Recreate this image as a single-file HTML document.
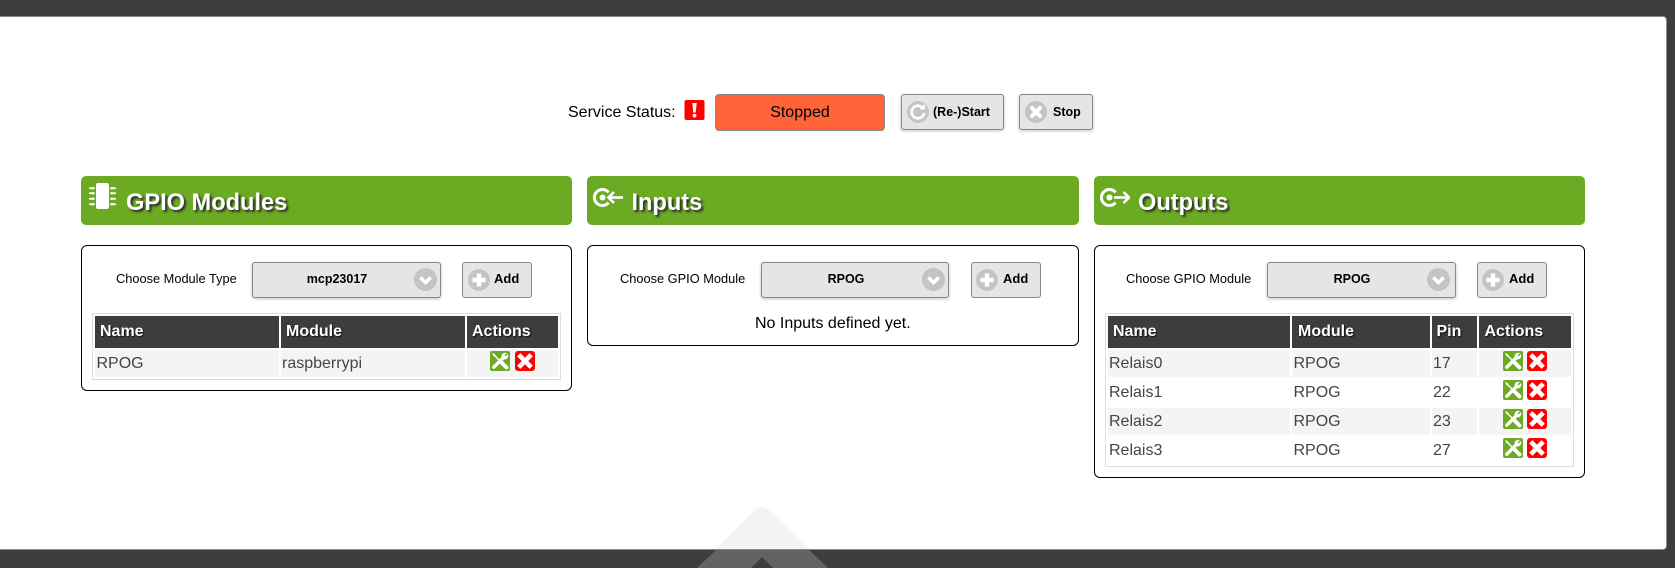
<!DOCTYPE html>
<html><head><meta charset="utf-8"><title>GPIO</title>
<style>
html,body{margin:0;padding:0}
body{width:1675px;height:568px;background:#3d3d3d;position:relative;overflow:hidden;font-family:"Liberation Sans",Arial,sans-serif;color:#000}
div,span,svg{position:absolute;box-sizing:border-box}
.t{white-space:nowrap;line-height:20px;height:20px}
.modal{left:-3px;top:16px;width:1670px;height:534px;background:#fff;border:1px solid #8a8a8a;border-radius:4px}
.gh{height:49px;top:176px;background:#6baa22;border-radius:5px}
.h{top:188px;line-height:30px;height:30px;font-size:23.6px;font-weight:bold;color:#fff;text-shadow:2px 2px 2px #2a2a2a;white-space:nowrap}
.box{top:245px;border:1px solid #000;border-radius:6px;background:#fff}
.btn{background:#e5e5e5;border:1px solid #888;border-radius:3px;box-shadow:0 1px 3px rgba(0,0,0,.25)}
.b{font-weight:bold;font-size:12.5px}
.a{font-weight:bold;font-size:13px}
.l{font-size:12.8px;top:269px}
.tbl{border:1px solid #ddd;top:313px;background:#fff}
.th{background:#3d3d3d;top:316px;height:32px}
.tht{color:#fff;font-weight:bold;font-size:16px;top:322px;text-shadow:1px 1px 1px #111}
.r{background:#f4f4f4;height:27px}
.c{font-size:16px;color:#444}
</style></head><body>
<div class="modal"></div>
<svg style="left:0;top:0" width="1675" height="568" viewBox="0 0 1675 568">
<path d="M716 549L755 510Q762 504 769 510L809 549Z" fill="#f4f4f4"/>
<path d="M716 550L697 568H828L809 550Z" fill="#636363"/>
<path d="M762 557L751 568H773Z" fill="#3d3d3d"/>
</svg>

<svg width="0" height="0" style="left:0;top:0">
<symbol id="wr" viewBox="0 0 20 20"><rect width="20" height="20" rx="2" fill="#6baa22"/>
<path d="M3.5 3.5L12 12" stroke="#fff" stroke-width="1.5" fill="none"/><path d="M11.5 11.500L16.500 16.500" stroke="#fff" stroke-width="4" stroke-linecap="round" fill="none"/><path d="M2 2L5 3.300 5.500 5.500 3.300 5Z" fill="#fff"/>
<path d="M3.800 16.200L12.500 7.500" stroke="#fff" stroke-width="3.400" stroke-linecap="round" fill="none"/><path d="M11.500 5.500C11.500 2.800 14.200 1 17 2L14.600 4.400 15.600 5.400 18 3C19 5.800 17.200 8.500 14.500 8.500Z" fill="#fff"/></symbol>
<symbol id="dl" viewBox="0 0 20 20"><rect width="20" height="20" rx="3" fill="#f00"/><path d="M5 5L15 15M15 5L5 15" stroke="#fff" stroke-width="5" stroke-linecap="square" transform="translate(10 10) scale(.92) translate(-10 -10)"/></symbol>
<symbol id="ad" viewBox="0 0 22 22"><circle cx="11" cy="11" r="11" fill="#c4c4c4"/><path d="M11 4.500V17.500M4.500 11H17.500" stroke="#fff" stroke-width="4.400"/></symbol>
<symbol id="dn" viewBox="0 0 22 22"><circle cx="11" cy="11" r="11" fill="#c4c4c4"/><path d="M6 9L11 14 16 9" stroke="#fff" stroke-width="3.400" fill="none"/></symbol>
</svg>

<!-- status -->
<div class="t" style="left:568px;top:103px;font-size:16px">Service Status:</div>
<svg style="left:684px;top:100px" width="21" height="20" viewBox="0 0 20 20"><rect width="20" height="20" rx="2" fill="#f00"/><path d="M7.800 3H12.200L11.200 12.500H8.800Z" fill="#fff"/><circle cx="10" cy="15.600" r="1.900" fill="#fff"/></svg>
<div class="btn" style="left:715px;top:94px;width:170px;height:37px;background:#ff6338;border-radius:4px;box-shadow:none"></div>
<div class="t" style="left:715px;width:170px;text-align:center;top:103px;font-size:16px">Stopped</div>
<div class="btn" style="left:901px;top:94px;width:103px;height:36px"></div>
<svg style="left:907px;top:101px" width="22" height="22" viewBox="0 0 22 22"><circle cx="11" cy="11" r="11" fill="#c4c4c4"/><path d="M16 7.200A6.300 6.300 0 1 0 17.200 12" stroke="#fff" stroke-width="2.600" fill="none"/><path d="M12.500 8.500H18V3Z" fill="#fff"/></svg>
<div class="t b" style="left:933px;top:102px">(Re-)Start</div>
<div class="btn" style="left:1019px;top:94px;width:74px;height:36px"></div>
<svg style="left:1025px;top:101px" width="22" height="22" viewBox="0 0 22 22"><circle cx="11" cy="11" r="11" fill="#c4c4c4"/><path d="M7 7L15 15M15 7L7 15" stroke="#fff" stroke-width="4" stroke-linecap="round"/></svg>
<div class="t b" style="left:1053px;top:102px">Stop</div>

<!-- panel 1 -->
<div class="gh" style="left:81px;width:491px"></div>
<svg style="left:88px;top:183px" width="28" height="27" viewBox="0 0 28 27"><rect x="8" y="0" width="13" height="26" rx="2" fill="#fff"/><g fill="#fff"><path d="M1 4.500L6.500 4V6.500L1 6ZM1 9.500L6.500 9V11.500L1 11ZM1 15L6.500 14.500V17L1 16.500ZM1 20.500L6.500 20V22.500L1 22Z"/><path d="M22.500 4L28 4.500V6L22.500 6.500ZM22.500 9L28 9.500V11L22.500 11.500ZM22.500 14.500L28 15V16.500L22.500 17ZM22.500 20L28 20.500V22L22.500 22.500Z"/></g></svg>
<div class="h" style="left:126px">GPIO Modules</div>
<div class="box" style="left:81px;width:491px;height:146px"></div>
<div class="t l" style="left:116px">Choose Module Type</div>
<div class="btn" style="left:252px;top:262px;width:189px;height:36px"></div>
<div class="t b" style="left:252px;width:170px;text-align:center;top:269px">mcp23017</div>
<svg style="left:414px;top:268px" width="23" height="23"><use href="#dn"/></svg>
<div class="btn" style="left:462px;top:262px;width:70px;height:36px;box-shadow:none"></div>
<svg style="left:468px;top:269px" width="22" height="22"><use href="#ad"/></svg>
<div class="t a" style="left:494px;top:269px">Add</div>
<div class="tbl" style="left:92px;width:469px;height:67px"></div>
<div class="th" style="left:95px;width:184px"></div><div class="th" style="left:281px;width:184px"></div><div class="th" style="left:467px;width:91px"></div>
<div class="t tht" style="left:100px">Name</div><div class="t tht" style="left:286px">Module</div><div class="t tht" style="left:472px">Actions</div>
<div class="r" style="left:95px;top:350px;width:184px"></div><div class="r" style="left:281px;top:350px;width:184px"></div><div class="r" style="left:467px;top:350px;width:91px"></div>
<div class="t c" style="left:96.500px;top:354px">RPOG</div><div class="t c" style="left:282px;top:354px">raspberrypi</div>
<svg style="left:490px;top:351px" width="20" height="20"><use href="#wr"/></svg><svg style="left:515px;top:351px" width="20" height="20"><use href="#dl"/></svg>

<!-- panel 2 -->
<div class="gh" style="left:587px;width:492px"></div>
<svg style="left:593px;top:187px" width="30" height="21" viewBox="0 0 30 21"><path d="M15.600 5.400A8 8 0 1 0 15.600 15.600" stroke="#fff" stroke-width="3" fill="none"/><circle cx="9.500" cy="10.500" r="3" fill="#fff"/><path d="M30 10.500H16" stroke="#fff" stroke-width="2.600"/><path d="M21 5L15.500 10.500 21 16" stroke="#fff" stroke-width="2.600" fill="none"/></svg>
<div class="h" style="left:631.500px">Inputs</div>
<div class="box" style="left:587px;width:492px;height:101px"></div>
<div class="t l" style="left:620px">Choose GPIO Module</div>
<div class="btn" style="left:761px;top:262px;width:188px;height:36px"></div>
<div class="t b" style="left:761px;width:170px;text-align:center;top:269px">RPOG</div>
<svg style="left:922px;top:268px" width="23" height="23"><use href="#dn"/></svg>
<div class="btn" style="left:971px;top:262px;width:70px;height:36px;box-shadow:none"></div>
<svg style="left:976px;top:269px" width="22" height="22"><use href="#ad"/></svg>
<div class="t a" style="left:1003px;top:269px">Add</div>
<div class="t" style="left:755px;top:314px;font-size:16px">No Inputs defined yet.</div>

<!-- panel 3 -->
<div class="gh" style="left:1094px;width:491px"></div>
<svg style="left:1100px;top:187px" width="30" height="21" viewBox="0 0 30 21"><path d="M15.600 5.400A8 8 0 1 0 15.600 15.600" stroke="#fff" stroke-width="3" fill="none"/><circle cx="9.500" cy="10.500" r="3" fill="#fff"/><path d="M14 10.500H29" stroke="#fff" stroke-width="2.600"/><path d="M23.500 5L29 10.500 23.500 16" stroke="#fff" stroke-width="2.600" fill="none"/></svg>
<div class="h" style="left:1138px">Outputs</div>
<div class="box" style="left:1094px;width:491px;height:233px"></div>
<div class="t l" style="left:1126px">Choose GPIO Module</div>
<div class="btn" style="left:1267px;top:262px;width:189px;height:36px"></div>
<div class="t b" style="left:1267px;width:170px;text-align:center;top:269px">RPOG</div>
<svg style="left:1427px;top:268px" width="23" height="23"><use href="#dn"/></svg>
<div class="btn" style="left:1477px;top:262px;width:70px;height:36px;box-shadow:none"></div>
<svg style="left:1482px;top:269px" width="22" height="22"><use href="#ad"/></svg>
<div class="t a" style="left:1509px;top:269px">Add</div>
<div class="tbl" style="left:1105px;width:469px;height:154px"></div>
<div class="th" style="left:1108px;width:182px"></div><div class="th" style="left:1292px;width:138px"></div><div class="th" style="left:1432px;width:45px"></div><div class="th" style="left:1479px;width:92px"></div>
<div class="t tht" style="left:1113px">Name</div><div class="t tht" style="left:1298px">Module</div><div class="t tht" style="left:1436.500px">Pin</div><div class="t tht" style="left:1484.500px">Actions</div>

<div class="r" style="left:1108px;top:350px;width:182px"></div><div class="r" style="left:1292px;top:350px;width:138px"></div><div class="r" style="left:1432px;top:350px;width:45px"></div><div class="r" style="left:1479px;top:350px;width:92px"></div>
<div class="r" style="left:1108px;top:408px;width:182px"></div><div class="r" style="left:1292px;top:408px;width:138px"></div><div class="r" style="left:1432px;top:408px;width:45px"></div><div class="r" style="left:1479px;top:408px;width:92px"></div>

<div class="t c" style="left:1109px;top:354px">Relais0</div><div class="t c" style="left:1293.500px;top:354px">RPOG</div><div class="t c" style="left:1433px;top:354px">17</div>
<div class="t c" style="left:1109px;top:383px">Relais1</div><div class="t c" style="left:1293.500px;top:383px">RPOG</div><div class="t c" style="left:1433px;top:383px">22</div>
<div class="t c" style="left:1109px;top:412px">Relais2</div><div class="t c" style="left:1293.500px;top:412px">RPOG</div><div class="t c" style="left:1433px;top:412px">23</div>
<div class="t c" style="left:1109px;top:441px">Relais3</div><div class="t c" style="left:1293.500px;top:441px">RPOG</div><div class="t c" style="left:1433px;top:441px">27</div>

<svg style="left:1503px;top:351px" width="20" height="20"><use href="#wr"/></svg><svg style="left:1527px;top:351px" width="20" height="20"><use href="#dl"/></svg>
<svg style="left:1503px;top:380px" width="20" height="20"><use href="#wr"/></svg><svg style="left:1527px;top:380px" width="20" height="20"><use href="#dl"/></svg>
<svg style="left:1503px;top:409px" width="20" height="20"><use href="#wr"/></svg><svg style="left:1527px;top:409px" width="20" height="20"><use href="#dl"/></svg>
<svg style="left:1503px;top:438px" width="20" height="20"><use href="#wr"/></svg><svg style="left:1527px;top:438px" width="20" height="20"><use href="#dl"/></svg>
</body></html>
